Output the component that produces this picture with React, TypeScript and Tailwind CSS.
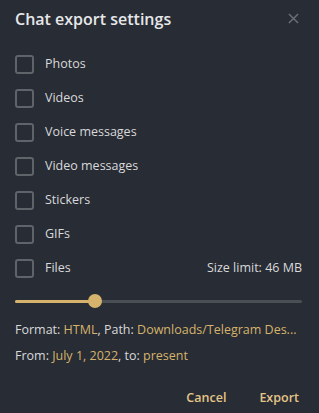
import { useState } from 'react';

const kinds = ['Photos', 'Videos', 'Voice messages', 'Video messages', 'Stickers', 'GIFs', 'Files'];

export default function App() {
  const [checked, setChecked] = useState<Record<string, boolean>>({});
  const [limit] = useState(28);

  return (
    <div
      className="w-[319px] h-[413px] bg-[#282c34] text-[#d8d9db] overflow-hidden"
      style={{ fontFamily: '"Open Sans", "Noto Sans", sans-serif' }}
    >
      {/* header */}
      <div className="h-[47px] flex items-start justify-between pl-[15px] pr-[20px] pt-[6px]">
        <h1 className="text-[16px] font-semibold text-[#e6e7e9] leading-[26px]">Chat export settings</h1>
        <button className="mt-[7px] text-[#6b7078]">
          <svg width="11" height="11" viewBox="0 0 12 12">
            <path d="M1 1L11 11M11 1L1 11" stroke="currentColor" strokeWidth="1.6" />
          </svg>
        </button>
      </div>

      {/* media types */}
      <div className="pl-[15px] pr-[17px]">
        {kinds.map((k) => (
          <div key={k} className="h-[34px] flex items-center text-[12.5px]">
            <button
              onClick={() => setChecked({ ...checked, [k]: !checked[k] })}
              className="w-[19px] h-[19px] rounded-[3px] border-2 border-[#5f636a] shrink-0"
            />
            <span className="ml-[11px] flex-1">{k}</span>
            {k === 'Files' && <span>Size limit: 46 MB</span>}
          </div>
        ))}

        {/* slider */}
        <div className="h-[32px] flex items-center relative">
          <div className="h-[3px] w-full bg-[#4a4e55] rounded-full">
            <div className="h-full bg-[#d6b36c] rounded-full" style={{ width: `${limit}%` }} />
          </div>
          <div
            className="absolute w-[14px] h-[14px] rounded-full bg-[#d6b36c] -translate-x-1/2"
            style={{ left: `${limit}%` }}
          />
        </div>

        <div className="text-[12.5px] leading-[26px] whitespace-nowrap">
          Format: <span className="text-[#d6b36c]">HTML</span>, Path:{' '}
          <span className="text-[#d6b36c]">Downloads/Telegram Des...</span>
        </div>
        <div className="text-[12.5px] leading-[26px]">
          From: <span className="text-[#d6b36c]">July 1, 2022</span>, to:{' '}
          <span className="text-[#d6b36c]">present</span>
        </div>
      </div>

      {/* actions */}
      <div className="flex justify-end items-center gap-[33px] pr-[20px] mt-[16px] h-[26px]">
        <button className="text-[12.5px] font-semibold text-[#e3c588]">Cancel</button>
        <button className="text-[12.5px] font-semibold text-[#e3c588]">Export</button>
      </div>
    </div>
  );
}
